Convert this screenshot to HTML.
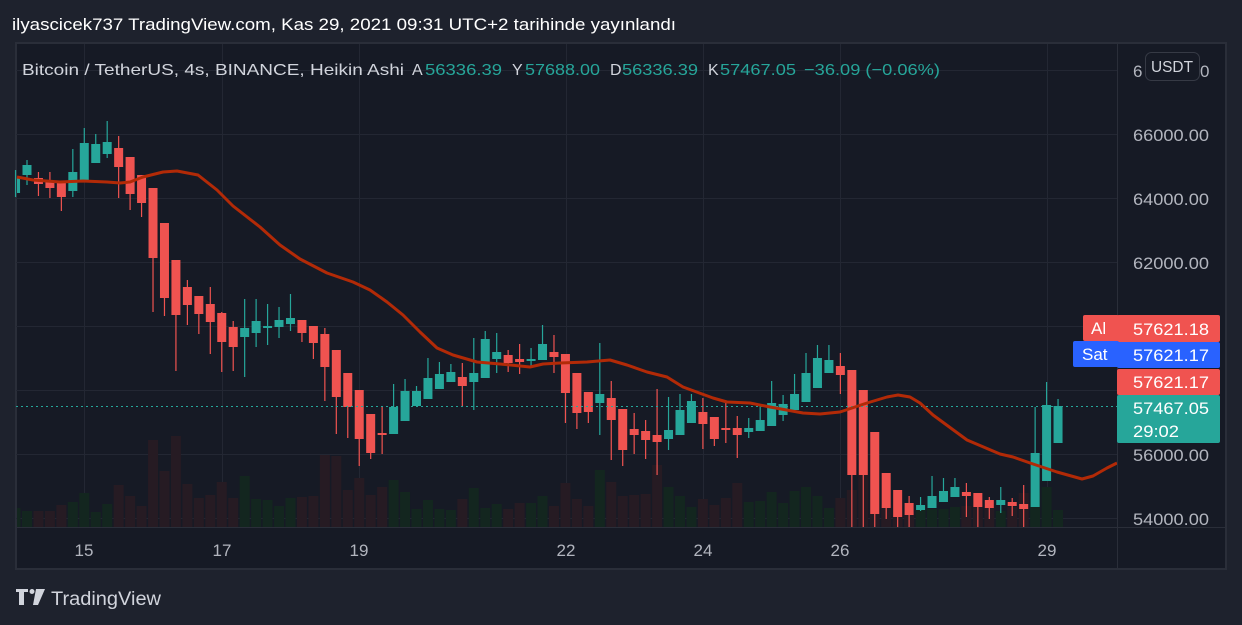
<!DOCTYPE html>
<html><head><meta charset="utf-8"><style>
html,body{margin:0;padding:0;background:#1e222d;width:1242px;height:625px;overflow:hidden}
svg{display:block}
text{font-family:"Liberation Sans","DejaVu Sans",sans-serif}
</style></head><body>
<svg id="s" width="1242" height="625" xmlns="http://www.w3.org/2000/svg">
<rect width="1242" height="625" fill="#1e222d"/>
<text x="12" y="30" font-size="17" fill="#ffffff" textLength="664" lengthAdjust="spacingAndGlyphs">ilyascicek737 TradingView.com, Kas 29, 2021 09:31 UTC+2 tarihinde yayınlandı</text>
<rect x="16" y="43" width="1210" height="526" fill="#161a25" stroke="#2a2e39" stroke-width="2"/>
<g id="grid" stroke="#232733" stroke-width="1"></g>
<g id="vol"></g>
<g id="candles"></g>
<line x1="16" y1="406.5" x2="1117" y2="406.5" stroke="#26a69a" stroke-width="1" stroke-dasharray="2,3"/>
<polyline id="ma" fill="none" stroke="#b22a07" stroke-width="3" stroke-linejoin="round"/>
<rect x="1117" y="44" width="108" height="483" fill="#161a25"/>
<line x1="1117.5" y1="43" x2="1117.5" y2="569" stroke="#2a2e39"/>
<line x1="16" y1="527.5" x2="1226" y2="527.5" stroke="#2a2e39"/>
<g font-size="17" fill="#b2b5be">
<text x="1133" y="77">6</text><text x="1200" y="77">0</text>
<text x="1133" y="141" textLength="76" lengthAdjust="spacingAndGlyphs">66000.00</text>
<text x="1133" y="205" textLength="76" lengthAdjust="spacingAndGlyphs">64000.00</text>
<text x="1133" y="269" textLength="76" lengthAdjust="spacingAndGlyphs">62000.00</text>
<text x="1133" y="461" textLength="76" lengthAdjust="spacingAndGlyphs">56000.00</text>
<text x="1133" y="525" textLength="76" lengthAdjust="spacingAndGlyphs">54000.00</text>
</g>
<rect x="1145.5" y="52.5" width="54" height="28" rx="6" fill="#161a25" stroke="#363a45"/>
<text x="1151" y="72" font-size="16" fill="#d1d4dc" textLength="42" lengthAdjust="spacingAndGlyphs">USDT</text>
<rect x="1083" y="315" width="36" height="26" rx="2" fill="#f05350"/>
<text x="1091" y="334" font-size="17" fill="#fff">Al</text>
<rect x="1117" y="315" width="103" height="27" rx="2" fill="#f05350"/>
<text x="1133" y="335" font-size="17" fill="#fff" textLength="76" lengthAdjust="spacingAndGlyphs">57621.18</text>
<rect x="1073" y="341" width="46" height="26" rx="2" fill="#2962ff"/>
<text x="1082" y="360" font-size="17" fill="#fff">Sat</text>
<rect x="1117" y="342" width="103" height="26" rx="2" fill="#2962ff"/>
<text x="1133" y="361" font-size="17" fill="#fff" textLength="76" lengthAdjust="spacingAndGlyphs">57621.17</text>
<rect x="1117" y="369" width="103" height="26" rx="2" fill="#f05350"/>
<text x="1133" y="388" font-size="17" fill="#fff" textLength="76" lengthAdjust="spacingAndGlyphs">57621.17</text>
<rect x="1117" y="395" width="103" height="48" rx="2" fill="#26a69a"/>
<text x="1133" y="414" font-size="17" fill="#fff" textLength="76" lengthAdjust="spacingAndGlyphs">57467.05</text>
<text x="1133" y="437" font-size="17" fill="#fff" textLength="46" lengthAdjust="spacingAndGlyphs">29:02</text>
<g font-size="17" fill="#b2b5be" text-anchor="middle">
<text x="84" y="556">15</text><text x="222" y="556">17</text><text x="359" y="556">19</text>
<text x="566" y="556">22</text><text x="703" y="556">24</text><text x="840" y="556">26</text><text x="1047" y="556">29</text>
</g>
<g font-size="16">
<text x="22" y="75" fill="#d1d4dc" textLength="382" lengthAdjust="spacingAndGlyphs">Bitcoin / TetherUS, 4s, BINANCE, Heikin Ashi</text>
<text x="412" y="75" fill="#d1d4dc">A</text><text x="425" y="75" fill="#26a69a" textLength="77" lengthAdjust="spacingAndGlyphs">56336.39</text>
<text x="512" y="75" fill="#d1d4dc">Y</text><text x="525" y="75" fill="#26a69a" textLength="75" lengthAdjust="spacingAndGlyphs">57688.00</text>
<text x="610" y="75" fill="#d1d4dc">D</text><text x="622" y="75" fill="#26a69a" textLength="76" lengthAdjust="spacingAndGlyphs">56336.39</text>
<text x="708" y="75" fill="#d1d4dc">K</text><text x="720" y="75" fill="#26a69a" textLength="76" lengthAdjust="spacingAndGlyphs">57467.05</text>
<text x="804" y="75" fill="#26a69a" textLength="136" lengthAdjust="spacingAndGlyphs">−36.09 (−0.06%)</text>
</g>
<g fill="#d1d4dc">
<path d="M16 589h12v3h-4v13h-5v-13h-3z"/>
<circle cx="32" cy="591.5" r="2.5"/>
<path d="M36 589h9l-7 16h-5z"/>
<text x="51" y="605" font-size="19" textLength="110" lengthAdjust="spacingAndGlyphs">TradingView</text>
</g>
</svg>
<script>
var NS="http://www.w3.org/2000/svg";
function el(p,t,a){var e=document.createElementNS(NS,t);for(var k in a)e.setAttribute(k,a[k]);p.appendChild(e);return e;}
var grid=document.getElementById('grid');
[70,134,198,262,326,390,454,518].forEach(function(y){el(grid,'line',{x1:16,x2:1117,y1:y+.5,y2:y+.5});});
[84,222,359,566,703,840,1047].forEach(function(x){el(grid,'line',{x1:x+.5,x2:x+.5,y1:44,y2:527});});
// [color, bodyTop, bodyBot, wickTop, wickBot]
var C=[
['g',177,193,170,197],
['g',165,175,160,185],['r',178,184,172,196],['r',182,188,172,198],['r',183,197,183,211],['g',172,191,149,197],
['g',143,180,128,180],['g',144,163,134,163],['g',142,154,121,158],['r',148,167,136,198],['r',157,194,157,210],
['r',175,203,175,217],['r',188,258,188,312],['r',223,298,223,316],['r',260,315,260,371],['r',287,305,280,325],
['r',296,314,296,334],['r',304,322,287,354],['r',313,342,312,372],['r',327,347,321,371],['g',328,337,299,377],
['g',321,333,299,347],['g',326,328,304,345],['g',320,327,307,338],['g',318,324,294,331],['r',320,333,320,342],
['r',326,343,326,359],['r',334,367,328,401],['r',350,397,350,434],['r',373,407,373,438],['r',390,439,390,466],
['r',414,453,414,459],['r',433,435,406,454],['g',407,434,384,434],['g',391,421,379,421],['g',391,406,386,406],
['g',378,399,358,399],['g',374,389,362,389],['g',372,382,364,382],['r',377,386,363,406],['g',373,382,338,410],
['g',339,378,331,378],['g',352,359,333,373],['r',355,363,350,372],['r',359,362,344,374],['g',359,361,348,366],
['g',344,360,325,360],['r',352,357,335,373],['r',354,393,354,423],['r',373,413,373,429],['r',392,412,392,423],
['g',394,403,343,435],['r',398,420,381,460],['r',409,450,409,466],['r',429,435,413,454],['r',431,440,420,459],
['r',435,442,389,475],['g',430,439,397,450],['g',410,435,394,435],['g',401,423,394,423],['r',412,424,398,449],
['r',417,439,417,446],['r',428,430,403,443],['r',428,435,416,458],['g',428,432,418,438],['g',420,431,406,431],
['g',403,426,381,426],['g',404,415,395,421],['g',394,410,374,410],['g',373,402,353,402],['g',358,388,345,388],
['g',360,373,345,373],['r',366,375,353,394],['r',370,475,370,527],['r',390,475,390,527],['r',432,514,432,527],
['r',473,508,473,519],['r',490,517,490,527],['r',503,515,496,527],['g',505,510,497,511],['g',496,508,476,508],
['g',491,502,478,502],['g',487,497,478,497],['r',492,496,483,517],['r',493,507,493,527],['r',500,508,497,519],
['g',500,505,487,513],['r',502,506,498,516],['r',504,509,485,527],['g',453,507,407,507],['g',405,481,382,481],
['g',406,443,399,443]];
var V=[508,511,511,511,505,502,493,512,504,485,496,506,440,471,436,484,498,495,482,498,476,499,500,506,498,497,496,455,456,490,478,495,487,480,492,509,
500,509,510,499,488,508,504,509,503,503,496,506,483,499,506,470,482,496,495,494,465,487,496,507,499,505,498,483,502,501,492,503,491,487,496,508,498,
490,470,500,505,510,512,510,509,509,507,506,507,507,511,507,493,493,487,510];
var vg=document.getElementById('vol'),cg=document.getElementById('candles');
C.forEach(function(c,j){
  var i=j-1, x=27+i*11.456, col=c[0]=='g'?'#26a69a':'#ef5350', vc=c[0]=='g'?'#13261f':'#261b23';
  var vy=V[j]||505;
  var x0=Math.max(17,x-5), x1=x+5;
  if(x1>17) el(vg,'rect',{x:x0,y:vy,width:x1-x0,height:527-vy,fill:vc});
  el(cg,'rect',{x:x-.6,y:c[3],width:1.2,height:c[4]-c[3],fill:col});
  var bx0=Math.max(17,x-4.5), bx1=x+4.5;
  if(bx1>17) el(cg,'rect',{x:bx0,y:c[1],width:bx1-bx0,height:Math.max(2,c[2]-c[1]),fill:col});
});
document.getElementById('ma').setAttribute('points',"17,177 33,180 60,182 83,181 107,182 120,183 130,182 143,177 163,172 177,171 198,175 217,190 233,206 260,227 280,245 300,259 327,273 353,282 370,290 387,302 403,315 420,332 437,348 453,355 477,362 500,364 530,367 543,364 560,363 587,362 610,360 627,365 647,372 667,377 683,387 713,398 727,402 750,403 770,407 803,413 820,414 840,412 867,403 887,397 898,395 910,397 920,403 933,415 967,440 1000,454 1013,457 1033,464 1057,472 1082,479 1093,476 1107,468 1117,463");
</script>
</body></html>
